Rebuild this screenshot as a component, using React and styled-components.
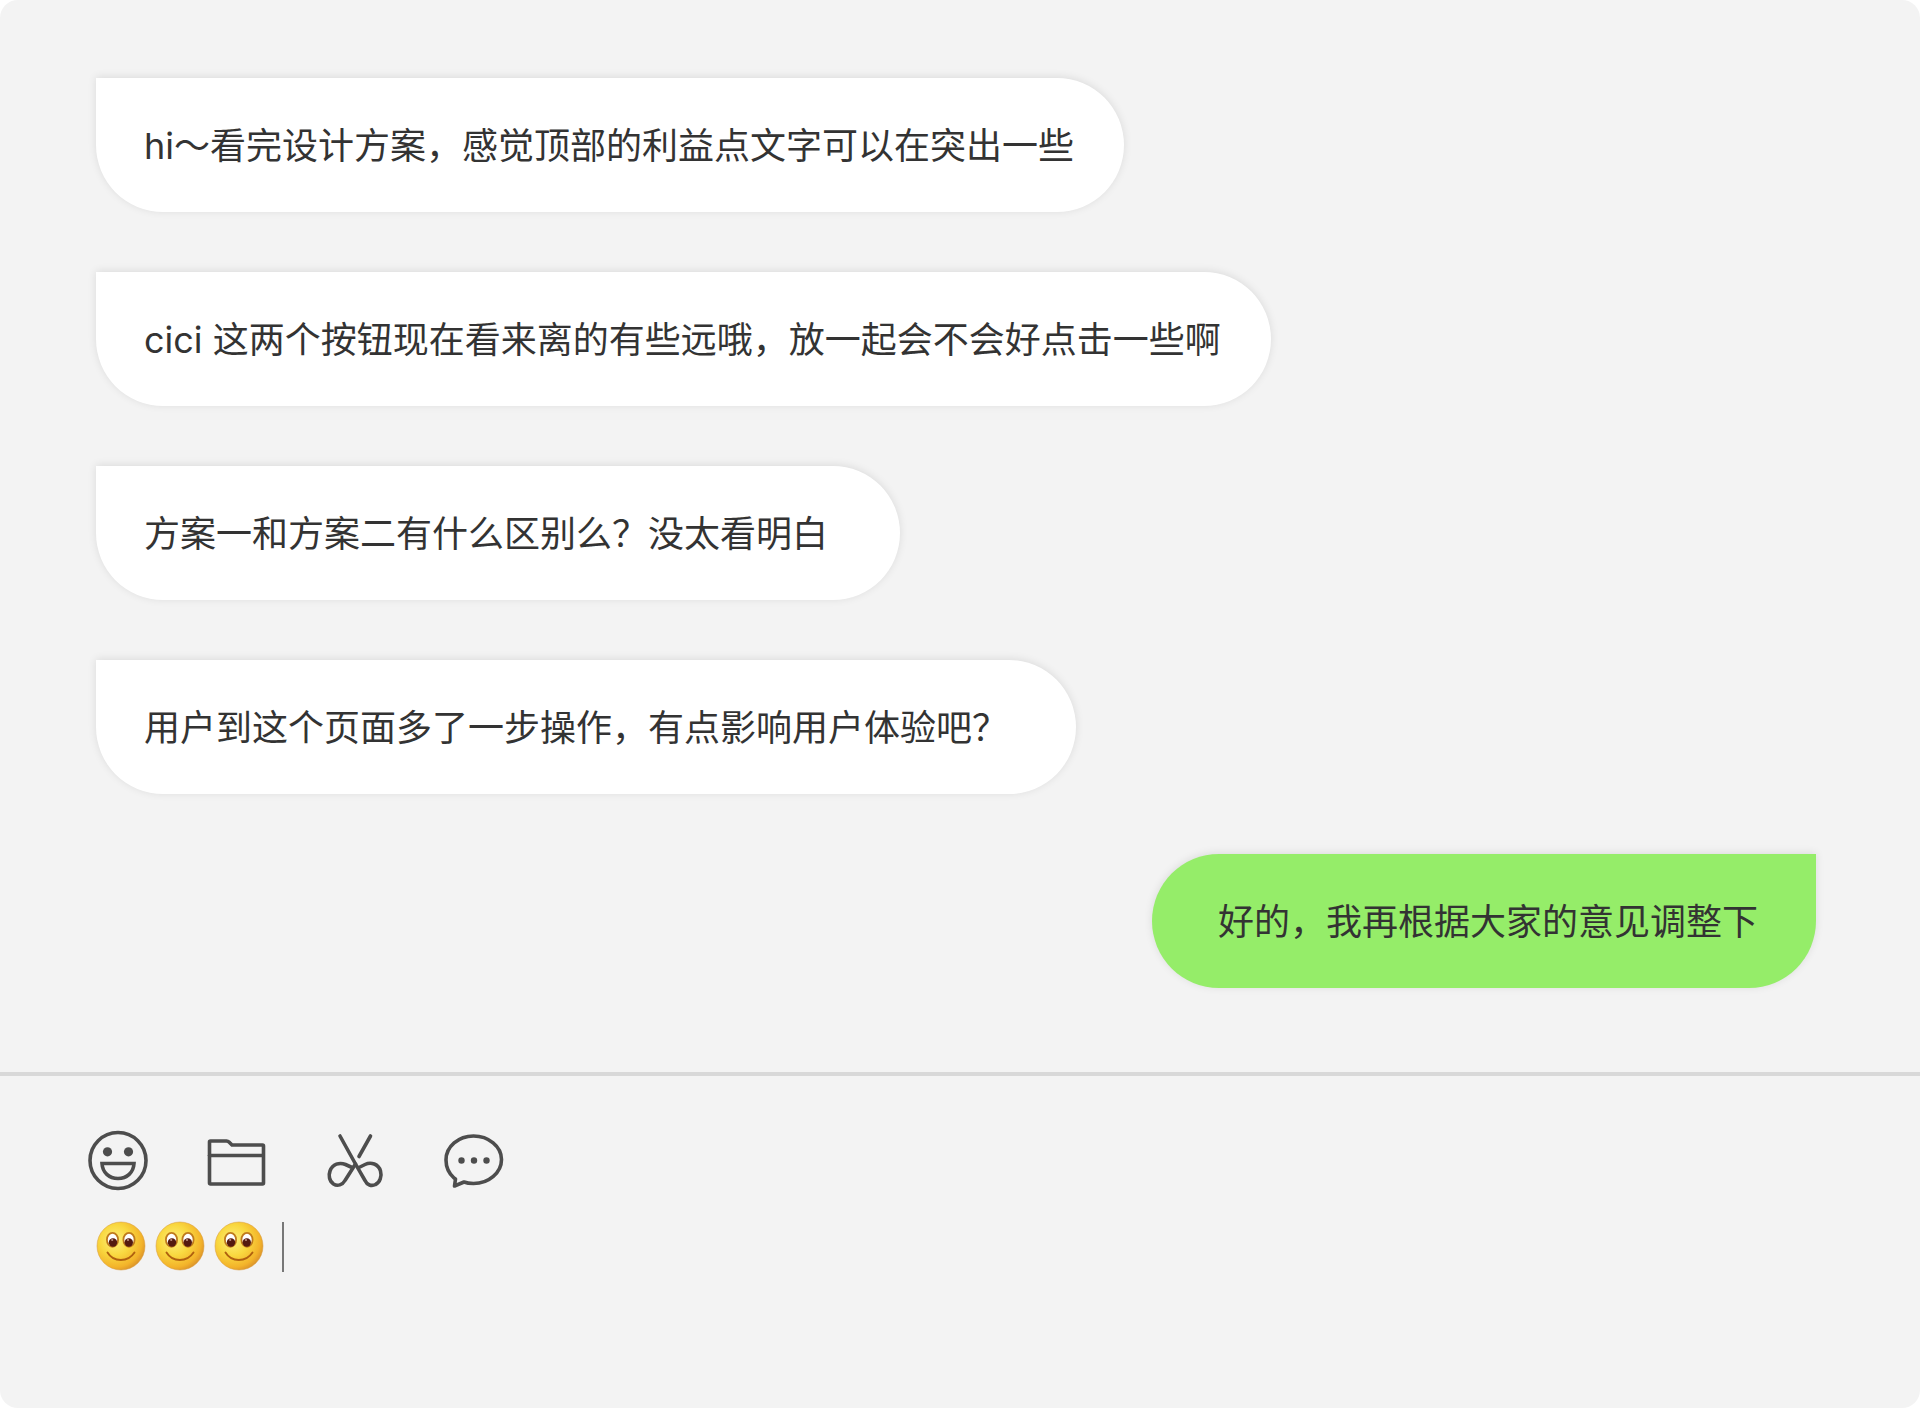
import styled, { createGlobalStyle } from 'styled-components';

const messages = [
    { text: 'hi～看完设计方案，感觉顶部的利益点文字可以在突出一些', right: 50 },
    { text: 'cici 这两个按钮现在看来离的有些远哦，放一起会不会好点击一些啊', right: 50 },
    { text: '方案一和方案二有什么区别么？没太看明白', right: 72 },
    { text: '用户到这个页面多了一步操作，有点影响用户体验吧？', right: 68 },
    { text: '好的，我再根据大家的意见调整下', mine: true, left: 66, right: 58 },
];

const SmileIcon = () => (
    <Icon viewBox="0 0 60 60">
        <circle cx="30" cy="30.500" r="28" />
        <circle cx="19.5" cy="21.800" r="4.6" className="solid" />
        <circle cx="40.5" cy="21.800" r="4.6" className="solid" />
        <path d="M14 33.500H46C45.500 42.500 39 48.500 30 48.500S14.500 42.500 14 33.500Z" strokeLinejoin="miter" />
    </Icon>
)

const FolderIcon = () => (
    <Icon viewBox="0 0 60 60">
        <path d="M4.500 11H20.500Q22 11 23 12L26 15H56.500Q57.500 15 57.500 16V53Q57.500 54 56.500 54H4.500Q3.500 54 3.500 53V12Q3.500 11 4.500 11Z" />
        <path d="M3.500 25.500H57" />
    </Icon>
)

const ScissorsIcon = () => (
    <Icon viewBox="0 0 60 60">
        <path d="M16 6L31.500 34L41 50.500C43 55 47.500 56.500 51.500 54.500C56 52.500 58 46 56.500 41C54.500 34 47 31.500 41 34.500L35 37.500" />
        <path d="M46.500 6L35 26.500" />
        <path d="M31.500 34L21 50.500C18.500 55 13.500 56.500 9.500 54C5 51 4.500 45 6 41C8.500 34 15.500 32 21.500 34.500L28 37.500" />
    </Icon>
)

const ChatIcon = () => (
    <Icon viewBox="0 0 60 60">
        <path d="M12 48C7 43.500 4 37 4 30C4 16.500 16.500 6 31.500 6S59.500 16.500 59.500 29.500S47 53.500 31.500 53.500C28 53.500 25 53.200 22 52L12.500 56L13.500 49Z" />
        <circle cx="19.500" cy="30.500" r="3.200" className="solid" />
        <circle cx="32" cy="30.500" r="3.200" className="solid" />
        <circle cx="44.500" cy="30.500" r="3.200" className="solid" />
    </Icon>
)

const Emoji = () => (
    <EmojiSvg viewBox="0 0 50 50" role="img" aria-label="微笑">
        <defs>
            <radialGradient id="face" cx="0.38" cy="0.38" r="0.7">
                <stop offset="0" stopColor="#fdf07e" />
                <stop offset="0.45" stopColor="#f9d840" />
                <stop offset="0.8" stopColor="#f3b32a" />
                <stop offset="1" stopColor="#d48a2a" />
            </radialGradient>
        </defs>
        <circle cx="25" cy="24" r="24" fill="url(#face)" stroke="#d79a3a" strokeOpacity="0.5" />
        <ellipse cx="16.500" cy="17.800" rx="5.600" ry="7" fill="#fff" stroke="#bf7a1c" strokeWidth="1.800" />
        <ellipse cx="33" cy="17.800" rx="5.600" ry="7" fill="#fff" stroke="#bf7a1c" strokeWidth="1.800" />
        <circle cx="17" cy="20.500" r="4.200" fill="#541a10" />
        <circle cx="32.800" cy="20.500" r="4.200" fill="#541a10" />
        <circle cx="16.200" cy="18" r="1.100" fill="#b98f80" />
        <circle cx="32" cy="18" r="1.100" fill="#b98f80" />
        <path d="M11.500 30.500C17.500 40.500 32 40.500 38.500 30.500" fill="none" stroke="#b0600f" strokeWidth="1.900" strokeLinecap="round" />
    </EmojiSvg>
)

const tools = [
    { label: '表情', icon: <SmileIcon /> },
    { label: '文件', icon: <FolderIcon /> },
    { label: '截图', icon: <ScissorsIcon /> },
    { label: '聊天记录', icon: <ChatIcon /> },
];

export default function App() {
    return (
        <>
            <GlobalStyle />
            <Window>
                <MessageList>
                    {messages.map((message, id) => {
                        return (
                            <Bubble key={id} $mine={message.mine} $left={message.left} $right={message.right}>
                                {message.text}
                            </Bubble>
                        )
                    })}
                </MessageList>
                <Composer>
                    <Toolbar>
                        {tools.map((tool) => {
                            return (
                                <ToolButton key={tool.label} type="button" aria-label={tool.label}>
                                    {tool.icon}
                                </ToolButton>
                            )
                        })}
                    </Toolbar>
                    <Editor>
                        <Emoji />
                        <Emoji />
                        <Emoji />
                        <Caret />
                        <TextInput type="text" aria-label="输入消息" />
                    </Editor>
                </Composer>
            </Window>
        </>
    )
}

const GlobalStyle = createGlobalStyle`
    * {
        box-sizing: border-box;
    }
    body {
        margin: 0;
        background-color: #ffffff;
        font-family: Inter, "Noto Sans CJK SC", sans-serif;
        color: #333333;
    }
`;

const Window = styled.main`
    display: flex;
    flex-direction: column;
    min-height: 100vh;
    background-color: #f3f3f3;
    border-radius: 18px;
`;

const MessageList = styled.ul`
    display: flex;
    flex-direction: column;
    align-items: flex-start;
    gap: 60px;
    margin: 0;
    padding: 78px 104px 84px 96px;
    list-style: none;
    border-bottom: 4px solid #d8d8d8;
`;

const Bubble = styled.li`
    align-self: ${(props) => (props.$mine ? 'flex-end' : 'flex-start')};
    padding: 41px ${(props) => props.$right}px 39px ${(props) => props.$left || 48}px;
    font-size: 36px;
    line-height: 54px;
    background-color: ${(props) => (props.$mine ? '#95ed69' : '#ffffff')};
    border-radius: ${(props) => (props.$mine ? '67px 0 67px 67px' : '0 67px 67px 67px')};
    box-shadow: 0 -1px 8px rgba(0, 0, 0, 0.1);
`;

const Composer = styled.section`
    flex: 1;
    padding: 54px 104px 54px 88px;
`;

const Toolbar = styled.div`
    display: flex;
    gap: 58px;
`;

const ToolButton = styled.button`
    display: flex;
    padding: 0;
    border: none;
    background: none;
    cursor: pointer;
`;

const Icon = styled.svg`
    width: 60px;
    height: 60px;
    overflow: visible;
    fill: none;
    stroke: #4d4d4d;
    stroke-width: 3.6;
    stroke-linecap: round;
    stroke-linejoin: round;
    .solid {
        fill: #4d4d4d;
        stroke: none;
    }
`;

const Editor = styled.div`
    display: flex;
    align-items: center;
    gap: 9px;
    margin-top: 32px;
    padding-left: 8px;
`;

const EmojiSvg = styled.svg`
    flex: none;
    width: 50px;
    height: 50px;
    overflow: visible;
`;

const Caret = styled.span`
    flex: none;
    width: 2px;
    height: 50px;
    margin-left: 9px;
    background-color: #777777;
`;

const TextInput = styled.input`
    flex: 1;
    height: 50px;
    padding: 0;
    border: none;
    outline: none;
    background: none;
    font: inherit;
    font-size: 36px;
    color: inherit;
`;
